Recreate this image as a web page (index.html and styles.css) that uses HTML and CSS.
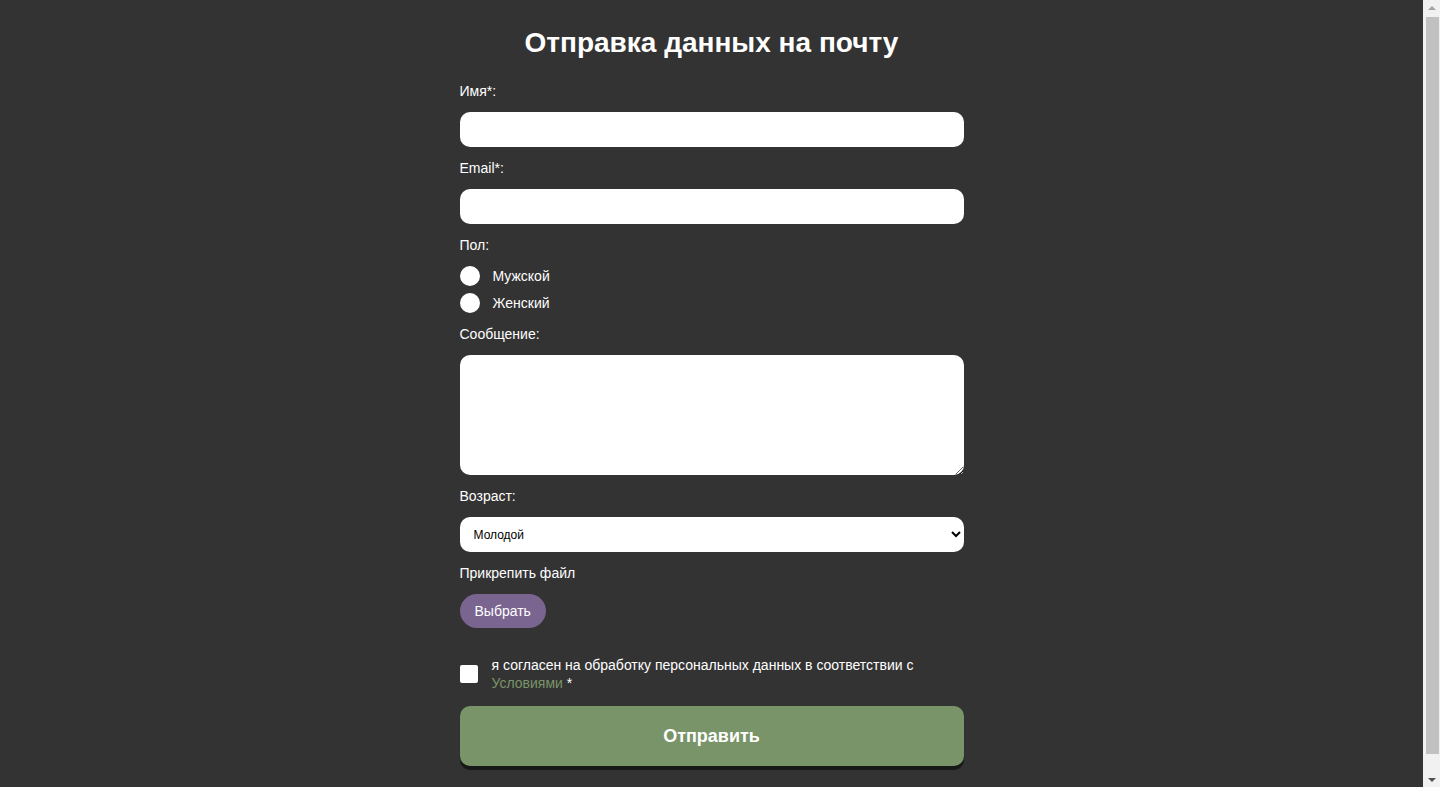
FILE: index.html
```html
<!DOCTYPE html>
<html lang="ru">
<head>
<meta charset="utf-8">
<title>Отправка данных на почту</title>
<link rel="stylesheet" href="styles.css">
</head>
<body>
<main class="page">
  <h1 class="title">Отправка данных на почту</h1>
  <form class="form">
    <label class="label" for="name">Имя*:</label>
    <input class="field" id="name" type="text">
    <label class="label" for="email">Email*:</label>
    <input class="field" id="email" type="email">
    <span class="label">Пол:</span>
    <div class="radios">
      <label class="radio-row"><input class="radio" type="radio" name="sex"><span>Мужской</span></label>
      <label class="radio-row"><input class="radio" type="radio" name="sex"><span>Женский</span></label>
    </div>
    <label class="label" for="msg">Сообщение:</label>
    <textarea class="area" id="msg"></textarea>
    <label class="label" for="age">Возраст:</label>
    <select class="select" id="age">
      <option>Молодой</option>
      <option>Средний</option>
      <option>Пожилой</option>
    </select>
    <span class="label">Прикрепить файл</span>
    <div class="file-row"><button type="button" class="file-btn">Выбрать</button></div>
    <label class="agree">
      <input class="check" type="checkbox">
      <span class="agree-text">я согласен на обработку персональных данных в соответствии с <a class="link" href="#">Условиями</a> *</span>
    </label>
    <button type="submit" class="submit">Отправить</button>
  </form>
</main>
<div class="scrollbar" aria-hidden="true">
  <span class="arrow arrow-up"></span>
  <span class="thumb"></span>
  <span class="arrow arrow-down"></span>
</div>
</body>
</html>
```
FILE: styles.css
```css
html, body {
  margin: 0;
  padding: 0;
  background: #333333;
}
body {
  font-family: "Liberation Sans", Arial, sans-serif;
  color: #ffffff;
  margin-right: 17px;
}
.page {
  width: 504px;
  margin: 0 auto;
  padding-bottom: 34px;
}
.title {
  margin: 27px 0 24px;
  font-size: 28px;
  line-height: 32px;
  font-weight: bold;
  text-align: center;
}
.form {
  display: flex;
  flex-direction: column;
  gap: 13px;
}
.label {
  display: block;
  font-size: 14px;
  line-height: 16px;
}
.field, .select {
  box-sizing: border-box;
  width: 100%;
  height: 35px;
  border: none;
  border-radius: 10px;
  background: #ffffff;
  margin: 0;
  font-family: "Liberation Sans", Arial, sans-serif;
}
.select {
  padding: 0 10px;
  font-size: 12px;
  color: #000000;
}
.area {
  box-sizing: border-box;
  width: 100%;
  height: 120px;
  border: none;
  border-radius: 10px;
  background: #ffffff;
  margin: 0;
  display: block;
}
.radios {
  display: flex;
  flex-direction: column;
  gap: 7px;
}
.radio-row {
  display: flex;
  align-items: center;
  gap: 13px;
  font-size: 14px;
  line-height: 16px;
}
.radio {
  appearance: none;
  width: 20px;
  height: 20px;
  margin: 0;
  border-radius: 50%;
  background: #ffffff;
}
.file-row {
  display: flex;
}
.file-btn {
  height: 34px;
  padding: 0 15px;
  border: none;
  border-radius: 17px;
  background: #7a6490;
  color: #ffffff;
  font-family: "Liberation Sans", Arial, sans-serif;
  font-size: 14px;
}
.agree {
  display: flex;
  align-items: center;
  gap: 14px;
  margin-top: 15px;
  font-size: 14px;
  line-height: 18px;
}
.check {
  appearance: none;
  flex: none;
  width: 18px;
  height: 18px;
  margin: 0;
  border-radius: 2px;
  background: #ffffff;
}
.link {
  color: #7a9469;
  text-decoration: none;
}
.submit {
  margin-top: 1px;
  height: 60px;
  width: 100%;
  border: none;
  border-radius: 10px;
  background: #7a9469;
  color: #ffffff;
  font-family: "Liberation Sans", Arial, sans-serif;
  font-size: 18px;
  font-weight: bold;
  box-shadow: 0 4px 1px rgba(0, 0, 0, 0.55);
}
.scrollbar {
  position: fixed;
  top: 0;
  right: 0;
  bottom: 0;
  width: 17px;
  background: #f1f1f1;
  display: flex;
  flex-direction: column;
  align-items: center;
  padding: 6px 0 5px;
  box-sizing: border-box;
}
.thumb {
  flex: 1;
  width: 13px;
  margin: 7px 0 24px;
  margin-left: 1px;
  background: #c1c1c1;
}
.arrow {
  width: 0;
  height: 0;
  border-left: 4px solid transparent;
  border-right: 4px solid transparent;
}
.arrow-up {
  border-bottom: 4px solid #a3a3a3;
}
.arrow-down {
  border-top: 4px solid #505050;
}
```
